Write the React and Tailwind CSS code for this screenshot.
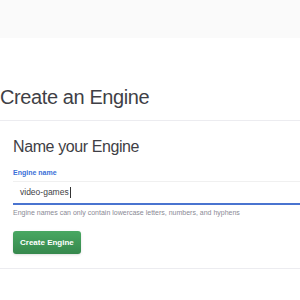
import React from "react";

export default function App() {
  return (
    <div className="h-[300px] w-[300px] overflow-hidden bg-white font-['Liberation_Sans',Arial,sans-serif]">
      <div className="h-[38px] bg-[#fafafa]" />
      <div className="pt-[47px]">
        <h1 className="whitespace-nowrap text-[20px] leading-[24px] tracking-[-0.4px] text-[#3f3f46]">
          Create an Engine
        </h1>
      </div>
      <div className="mt-[11px] border-y border-[#ececf0] pb-[14px] pt-[16px] pl-[13px]">
        <h2 className="whitespace-nowrap text-[16px] leading-[20px] tracking-[-0.4px] text-[#3f3f46]">
          Name your Engine
        </h2>
        <div className="mt-[11px] text-[7px] font-bold leading-[10px] text-[#3a6fd8]">
          Engine name
        </div>
        <div className="mt-[3px] flex h-[24px] items-center border-t border-[#f0f0f0] border-b-2 border-b-[#4a74d0] bg-white pl-[7px] text-[8.5px] text-[#3f3f46]">
          video-games<span className="ml-px h-[11px] w-px bg-[#333]" />
        </div>
        <div className="mt-[3px] whitespace-nowrap text-[7px] leading-[10px] text-[#8a8a95]">
          Engine names can only contain lowercase letters, numbers, and hyphens
        </div>
        <button className="mt-[13px] h-[23px] rounded-[3px] bg-gradient-to-b from-[#49a862] to-[#36884d] px-[7px] text-[8px] font-bold text-white shadow-sm">
          Create Engine
        </button>
      </div>
    </div>
  );
}
